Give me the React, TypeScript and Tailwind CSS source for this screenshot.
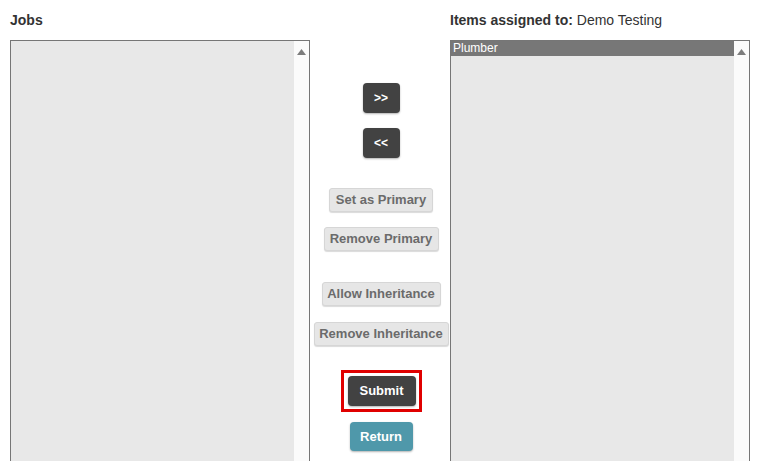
import React from 'react';

function ListBox({ items }: { items: string[] }) {
  return (
    <div className="flex h-[440px] w-[300px] border border-[#767676] bg-[#e8e8e8]">
      <div className="flex-1">
        {items.map((item) => (
          <div key={item} className="h-[15px] bg-[#777777] pl-[2px] text-[12px] leading-[15px] text-white">
            {item}
          </div>
        ))}
      </div>
      <div className="flex w-[15px] justify-center bg-[#fbfbfb] pt-[8px]">
        <svg width="9" height="6" viewBox="0 0 9 6">
          <polygon points="4.5,0 9,6 0,6" fill="#7c7c7c" />
        </svg>
      </div>
    </div>
  );
}

function DarkButton({ label, className = '' }: { label: string; className?: string }) {
  return (
    <button className={`h-[30px] rounded-[4px] bg-[#424242] text-[12px] font-bold text-white shadow-[0_1px_2px_rgba(0,0,0,0.3)] ${className}`}>
      {label}
    </button>
  );
}

function GrayButton({ label, className = '' }: { label: string; className?: string }) {
  return (
    <button className={`h-[24px] rounded-[3px] border border-[#d6d6d6] bg-[#e6e6e6] text-[13px] font-bold text-[#6b6b6b] shadow-[0_1px_1px_rgba(0,0,0,0.15)] ${className}`}>
      {label}
    </button>
  );
}

export default function App() {
  return (
    <div className="h-[461px] overflow-hidden bg-white px-[10px] pt-[10px] font-['Liberation_Sans',Arial,sans-serif] text-[#333]">
      <div className="flex">
        <div className="w-[300px]">
          <div className="h-[20px] text-[14px] font-bold leading-[20px]">Jobs</div>
          <div className="mt-[10px]">
            <ListBox items={[]} />
          </div>
        </div>

        <div className="flex w-[140px] flex-col items-center pt-[30px] pl-[2px]">
          <DarkButton label=">>" className="mt-[43px] w-[37px]" />
          <DarkButton label="<<" className="mt-[15px] w-[37px]" />
          <GrayButton label="Set as Primary" className="mt-[30px] w-[104px]" />
          <GrayButton label="Remove Primary" className="mt-[15px] w-[115px]" />
          <GrayButton label="Allow Inheritance" className="mt-[31px] w-[119px]" />
          <GrayButton label="Remove Inheritance" className="mt-[16px] w-[135px]" />
          <div className="mt-[24px] border-[3px] border-[#e00000] pt-[3px] pb-[3px] pl-[4px] pr-[3px]">
            <DarkButton label="Submit" className="w-[68px] text-[13px]" />
          </div>
          <button className="mt-[10px] h-[29px] w-[63px] rounded-[4px] bg-[#4f98aa] text-[13px] font-bold text-white shadow-[0_1px_2px_rgba(0,0,0,0.3)]">
            Return
          </button>
        </div>

        <div className="w-[300px]">
          <div className="h-[20px] text-[14px] leading-[20px]">
            <span className="font-bold">Items assigned to:</span> <span>Demo Testing</span>
          </div>
          <div className="mt-[10px]">
            <ListBox items={['Plumber']} />
          </div>
        </div>
      </div>
    </div>
  );
}
